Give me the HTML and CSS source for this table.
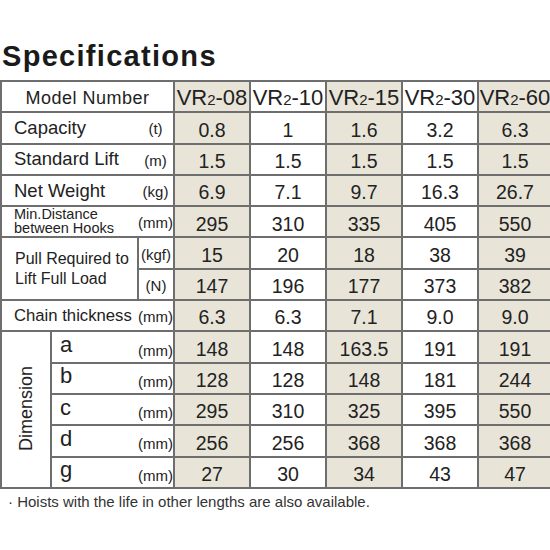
FILE: index.html
```html
<!DOCTYPE html>
<html>

<head>
	<title>Specifications</title>
	<link rel="stylesheet" href="styles.css">
</head>

<body>
	<h1>Specifications</h1>
	<table class="spec">
		<colgroup>
			<col class="c-dim">
			<col class="c-name">
			<col class="c-unit">
			<col class="c-val shade">
			<col class="c-val">
			<col class="c-val shade">
			<col class="c-val">
			<col class="c-last shade">
		</colgroup>
		<tr>
			<td colspan="3" class="model">Model Number</td>
			<td class="head">VR<span class="sub">2</span>-08</td>
			<td class="head">VR<span class="sub">2</span>-10</td>
			<td class="head">VR<span class="sub">2</span>-15</td>
			<td class="head">VR<span class="sub">2</span>-30</td>
			<td class="head">VR<span class="sub">2</span>-60</td>
		</tr>
		<tr>
			<td colspan="2" class="lbl">Capacity</td>
			<td class="unit nl">(t)</td>
			<td class="num">0.8</td>
			<td class="num">1</td>
			<td class="num">1.6</td>
			<td class="num">3.2</td>
			<td class="num">6.3</td>
		</tr>
		<tr>
			<td colspan="2" class="lbl">Standard Lift</td>
			<td class="unit nl">(m)</td>
			<td class="num">1.5</td>
			<td class="num">1.5</td>
			<td class="num">1.5</td>
			<td class="num">1.5</td>
			<td class="num">1.5</td>
		</tr>
		<tr>
			<td colspan="2" class="lbl">Net Weight</td>
			<td class="unit nl">(kg)</td>
			<td class="num">6.9</td>
			<td class="num">7.1</td>
			<td class="num">9.7</td>
			<td class="num">16.3</td>
			<td class="num">26.7</td>
		</tr>
		<tr>
			<td colspan="2" class="lbl small">Min.Distance<br>between Hooks</td>
			<td class="unit nl">(mm)</td>
			<td class="num">295</td>
			<td class="num">310</td>
			<td class="num">335</td>
			<td class="num">405</td>
			<td class="num">550</td>
		</tr>
		<tr>
			<td colspan="2" rowspan="2" class="pull">Pull Required to<br>Lift Full Load</td>
			<td class="unit">(kgf)</td>
			<td class="num">15</td>
			<td class="num">20</td>
			<td class="num">18</td>
			<td class="num">38</td>
			<td class="num">39</td>
		</tr>
		<tr>
			<td class="unit">(N)</td>
			<td class="num">147</td>
			<td class="num">196</td>
			<td class="num">177</td>
			<td class="num">373</td>
			<td class="num">382</td>
		</tr>
		<tr>
			<td colspan="2" class="lbl tight">Chain thickness</td>
			<td class="unit nl">(mm)</td>
			<td class="num">6.3</td>
			<td class="num">6.3</td>
			<td class="num">7.1</td>
			<td class="num">9.0</td>
			<td class="num">9.0</td>
		</tr>
		<tr>
			<td rowspan="5" class="dim"><span>Dimension</span></td>
			<td class="letter">a</td>
			<td class="unit nl low">(mm)</td>
			<td class="num">148</td>
			<td class="num">148</td>
			<td class="num">163.5</td>
			<td class="num">191</td>
			<td class="num">191</td>
		</tr>
		<tr>
			<td class="letter">b</td>
			<td class="unit nl low">(mm)</td>
			<td class="num">128</td>
			<td class="num">128</td>
			<td class="num">148</td>
			<td class="num">181</td>
			<td class="num">244</td>
		</tr>
		<tr>
			<td class="letter">c</td>
			<td class="unit nl low">(mm)</td>
			<td class="num">295</td>
			<td class="num">310</td>
			<td class="num">325</td>
			<td class="num">395</td>
			<td class="num">550</td>
		</tr>
		<tr>
			<td class="letter">d</td>
			<td class="unit nl low">(mm)</td>
			<td class="num">256</td>
			<td class="num">256</td>
			<td class="num">368</td>
			<td class="num">368</td>
			<td class="num">368</td>
		</tr>
		<tr>
			<td class="letter">g</td>
			<td class="unit nl low">(mm)</td>
			<td class="num">27</td>
			<td class="num">30</td>
			<td class="num">34</td>
			<td class="num">43</td>
			<td class="num">47</td>
		</tr>
	</table>
	<p class="note">· Hoists with the life in other lengths are also available.</p>
</body>

</html>
```

FILE: styles.css
```css
* {
	margin: 0px;
	padding: 0px;
	box-sizing: border-box;
}

body {
	font-family: "Liberation Sans", Arial, sans-serif;
	color: #222;
	background: #fff;
	overflow: hidden;
}

h1 {
	font-size: 29px;
	line-height: 34px;
	font-weight: bold;
	letter-spacing: 1.3px;
	color: #1a1a1a;
	margin: 39px 0 7px 2px;
}

.spec {
	width: 550px;
	border-collapse: collapse;
	table-layout: fixed;
}

.spec col.c-dim { width: 50px; }
.spec col.c-name { width: 87px; }
.spec col.c-unit { width: 36px; }
.spec col.c-val { width: 76px; }
.spec col.c-last { width: 74px; }

.spec col.shade {
	background: #e8e5d8;
}

.spec tr {
	height: 31.3px;
}

.spec td {
	border: 2px solid #6e6e6e;
	padding: 0;
	text-align: center;
	vertical-align: middle;
	line-height: 1;
	white-space: nowrap;
}

.spec td.model {
	font-size: 18px;
	letter-spacing: 0.5px;
	padding-top: 3px;
}

.spec td.head {
	font-size: 22px;
	padding-top: 3px;
}

.spec td.head .sub {
	font-size: 15px;
}

.spec td.num {
	font-size: 19.5px;
	padding-top: 5px;
}

.spec td.lbl {
	text-align: left;
	padding-left: 12px;
	font-size: 18.5px;
	padding-top: 1px;
	border-right: none;
}

.spec td.lbl.tight {
	font-size: 16.7px;
}

.spec td.lbl.small {
	font-size: 14.5px;
	line-height: 13.5px;
	padding-top: 0;
}

.spec td.pull {
	text-align: left;
	padding-left: 13px;
	font-size: 16px;
	line-height: 20px;
}

.spec td.unit {
	font-size: 15px;
	padding-top: 2px;
}

.spec td.unit.nl {
	border-left: none;
}

.spec td.unit.low {
	padding-top: 6px;
}

.spec td.letter {
	text-align: left;
	padding-left: 8px;
	font-size: 22px;
	padding-bottom: 4px;
	border-right: none;
}

.spec td.dim span {
	display: inline-block;
	font-size: 18px;
	writing-mode: vertical-rl;
	transform: rotate(180deg);
}

.note {
	font-size: 15px;
	color: #333;
	margin-top: 4px;
	padding-left: 8px;
}
```
